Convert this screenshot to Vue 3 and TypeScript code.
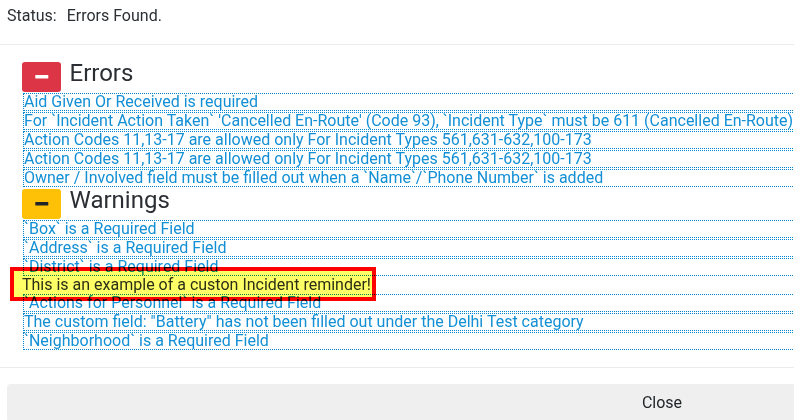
<script setup lang="ts">
interface Message {
  text: string
  marked?: boolean
}

interface Group {
  title: string
  kind: 'danger' | 'warning'
  messages: Message[]
}

const groups: Group[] = [
  {
    title: 'Errors',
    kind: 'danger',
    messages: [
      { text: 'Aid Given Or Received is required' },
      { text: "For `Incident Action Taken` 'Cancelled En-Route' (Code 93), `Incident Type` must be 611 (Cancelled En-Route)" },
      { text: 'Action Codes 11,13-17 are allowed only For Incident Types 561,631-632,100-173' },
      { text: 'Action Codes 11,13-17 are allowed only For Incident Types 561,631-632,100-173' },
      { text: 'Owner / Involved field must be filled out when a `Name`/`Phone Number` is added' },
    ],
  },
  {
    title: 'Warnings',
    kind: 'warning',
    messages: [
      { text: '`Box` is a Required Field' },
      { text: '`Address` is a Required Field' },
      { text: '`District` is a Required Field' },
      { text: 'This is an example of a custon Incident reminder!', marked: true },
      { text: '`Actions for Personnel` is a Required Field' },
      { text: 'The custom field: "Battery" has not been filled out under the Delhi Test category' },
      { text: '`Neighborhood` is a Required Field' },
    ],
  },
]
</script>

<template>
  <div class="dialog">
    <header class="status"><span>Status:</span><span>Errors Found.</span></header>
    <main class="body">
      <section v-for="group in groups" :key="group.title" class="group">
        <div class="heading">
          <button class="toggle" :class="group.kind" type="button">
            <svg width="14" height="4" viewBox="0 0 14 4"><rect x="0.3" width="13" height="3.5" rx="0.6" fill="currentColor" /></svg>
          </button>
          <h2>{{ group.title }}</h2>
        </div>
        <ul>
          <li v-for="(message, i) in group.messages" :key="i" :class="{ marked: message.marked }">
            <span class="text">{{ message.text }}</span>
            <span v-if="message.marked" class="highlight"></span>
          </li>
        </ul>
      </section>
    </main>
    <footer class="footer">
      <button class="close" type="button">Close</button>
    </footer>
  </div>
</template>

<style>
body {
  margin: 0;
  overflow: hidden;
}
</style>

<style scoped>
.dialog {
  width: 794px;
  height: 420px;
  overflow: hidden;
  background: #fff;
  color: #2b2f33;
  font: 16px/19px Roboto, sans-serif;
}
.status {
  display: flex;
  gap: 10px;
  box-sizing: border-box;
  height: 45px;
  padding: 6px 7px 0;
  border-bottom: 1px solid #e9ecef;
}
.body {
  box-sizing: border-box;
  height: 322px;
  padding: 17px 0 0 22px;
}
.heading {
  display: flex;
  gap: 8.5px;
  height: 31px;
}
.group + .group .heading {
  margin-top: 2px;
}
.toggle {
  display: flex;
  align-items: center;
  justify-content: center;
  width: 39px;
  height: 30px;
  padding: 0;
  border: 0;
  border-radius: 3px;
}
.danger {
  background: #dc3545;
  color: #fff;
}
.warning {
  background: #ffc107;
  color: #212529;
}
h2 {
  margin: 0;
  font-size: 24px;
  font-weight: 400;
  line-height: 22px;
}
ul {
  display: grid;
  gap: 1px;
  margin: 0 0 0 1px;
  padding: 0;
  list-style: none;
}
li {
  position: relative;
  box-sizing: border-box;
  width: 1290px;
  height: 18px;
  border: 1px dotted #0288d1;
  color: #128fd5;
  line-height: 16px;
  white-space: nowrap;
}
.marked {
  height: 16px;
  border-color: transparent;
  color: #2b2f33;
}
.marked .text {
  position: relative;
  top: -1px;
  margin-left: -2px;
}
.highlight {
  position: absolute;
  z-index: 1;
  top: -11px;
  left: -14px;
  box-sizing: border-box;
  width: 366px;
  height: 34px;
  border: 4px solid #f00;
  background: #ff6;
  mix-blend-mode: multiply;
}
.footer {
  padding: 16px 7px 0;
  border-top: 1px solid #e9ecef;
}
.close {
  width: 1310px;
  height: 38px;
  padding: 0 0 2px;
  border: 0;
  border-radius: 4px;
  background: #efefef;
  color: #212529;
  font: inherit;
}
</style>
